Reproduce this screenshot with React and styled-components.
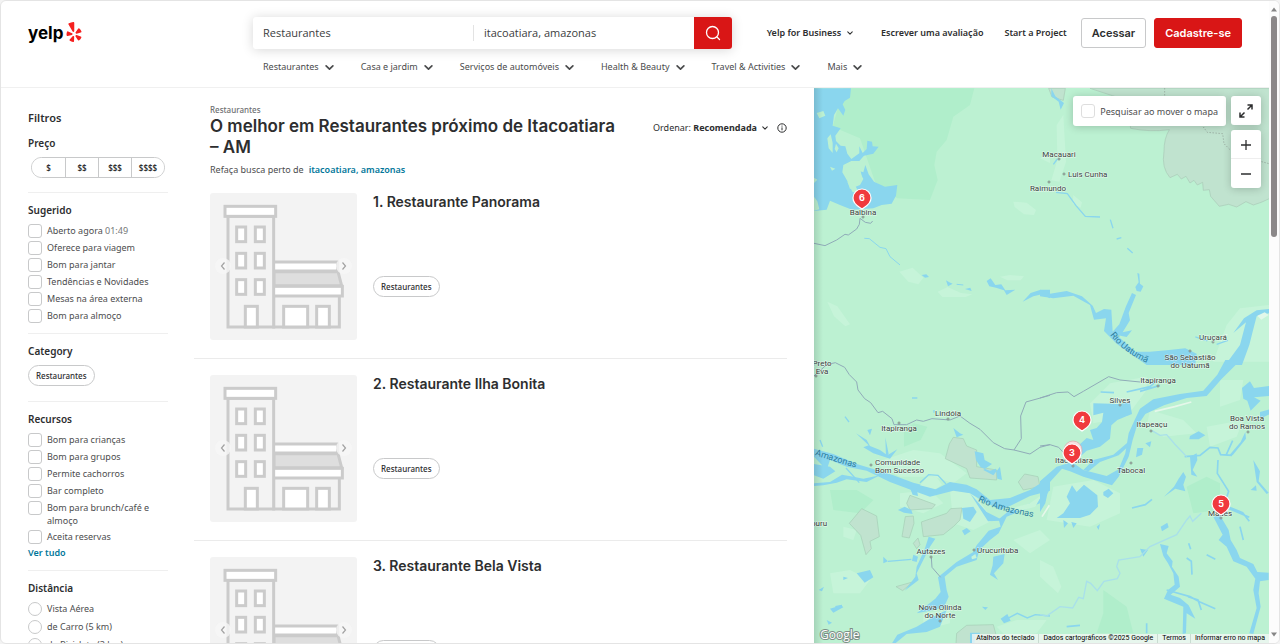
import React from "react";
import styled, { createGlobalStyle } from "styled-components";
import { FaYelp } from "react-icons/fa";

const ink = "#2d2e2f";
const red = "#d91616";
const teal = "#02779a";
const sans = '"Noto Sans", "Open Sans", sans-serif';
const display = 'Inter, "Liberation Sans", sans-serif';

const GlobalStyle = createGlobalStyle`
  * { box-sizing: border-box; }
  body { margin: 0; background: #f3f3f3; color: ${ink}; font: 9px/14px ${sans}; }
  button, input { font: inherit; color: inherit; margin: 0; }
  button { cursor: pointer; }
  h1, h2, h3, p, ul { margin: 0; padding: 0; }
  a { color: inherit; text-decoration: none; }
`;

const Frame = styled.div`
  display: grid;
  grid-template-columns: minmax(0, 1fr) 10px;
  height: 100vh;
  border: 1px solid #e4e4e4;
  border-radius: 6px;
  background: #fff;
  overflow: hidden;
`;

const Page = styled.div`
  display: flex;
  flex-direction: column;
  min-height: 0;
`;

const ScrollTrack = styled.div`
  display: flex;
  flex-direction: column;
  align-items: center;
  padding: 6px 0;
  background: #fcfcfc;
  gap: 4px;
`;

const ScrollThumb = styled.div`
  width: 6px;
  height: 35%;
  border-radius: 3px;
  background: #8b8889;
  margin-bottom: auto;
`;

/* ---------- header ---------- */

const Header = styled.header`
  padding: 16px 27px 13px;
  border-bottom: 1px solid #f0f0f0;
`;

const TopRow = styled.div`
  display: grid;
  grid-template-columns: 225px minmax(0, 479px) 1fr;
  align-items: center;
`;

const Logo = styled.a`
  display: flex;
  align-items: center;
  gap: 1px;
  color: #000;
  font: 700 17px/24px ${display};
  svg { color: #f5201f; margin-bottom: 3px; }
`;

const SearchForm = styled.form`
  display: grid;
  grid-template-columns: 1fr 1px 1fr 38px;
  align-items: center;
  height: 32px;
  border-radius: 3px;
  background: #fff;
  box-shadow: 0 1px 12px rgba(0, 0, 0, 0.16);
`;

const SearchInput = styled.input`
  width: 100%;
  border: 0;
  padding: 0 10px;
  background: transparent;
  font: 11px/16px "Open Sans", sans-serif;
  color: #3c3d3e;
  outline: none;
`;

const SearchDivider = styled.span`
  height: 16px;
  background: #e3e3e3;
`;

const SearchButton = styled.button`
  display: grid;
  place-items: center;
  height: 32px;
  border: 0;
  padding: 0;
  border-radius: 0 3px 3px 0;
  background: ${red};
  color: #fff;
`;

const UserNav = styled.nav`
  display: flex;
  justify-content: flex-end;
  align-items: center;
  gap: 21px;
  font-weight: 600;
  white-space: nowrap;
`;

const NavButton = styled.button`
  display: flex;
  align-items: center;
  gap: ${(p) => p.$gap || 6}px;
  border: 0;
  padding: 0;
  background: none;
  white-space: nowrap;
  margin-right: ${(p) => p.$after || 0}px;
`;

const AccountButtons = styled.div`
  display: flex;
  gap: 8px;
  margin-left: -7px;
`;

const AccountButton = styled.button`
  height: 30px;
  padding: 0 10px;
  border-radius: 3px;
  border: 1px solid ${(p) => (p.$primary ? red : "#c8c9ca")};
  background: ${(p) => (p.$primary ? red : "#fff")};
  color: ${(p) => (p.$primary ? "#fff" : ink)};
  font: 600 11px/16px ${display};
`;

const CategoryNav = styled.nav`
  display: flex;
  gap: 27px;
  margin: 11px 0 0 235px;
  color: #4a4b4c;
`;

/* ---------- body columns ---------- */

const Main = styled.main`
  flex: 1;
  min-height: 0;
  display: grid;
  grid-template-columns: 193px minmax(0, 620fr) minmax(0, 455fr);
  overflow: hidden;
`;

const Sidebar = styled.aside`
  padding: 23px 26px 0 27px;
  min-height: 0;
  overflow: hidden;
`;

const SidebarTitle = styled.h2`
  font-size: 11px;
  line-height: 14px;
  font-weight: 600;
  margin-bottom: 1px;
`;

const Section = styled.section`
  padding: 10px 0;
  border-bottom: 1px solid #efefef;
`;

const SectionTitle = styled.h3`
  font-size: 10px;
  line-height: 14px;
  font-weight: 600;
  margin-bottom: 7px;
`;

const PriceGroup = styled.div`
  display: grid;
  grid-template-columns: repeat(4, 1fr);
  height: 21px;
  margin: 0 3px 4px;
  border: 1px solid #c8c9ca;
  border-radius: 11px;
  overflow: hidden;
`;

const PriceButton = styled.button`
  border: 0;
  padding: 0;
  background: #fff;
  font-size: 8px;
  line-height: 12px;
  font-weight: 600;
  & + & { border-left: 1px solid #c8c9ca; }
`;

const Options = styled.div`
  display: flex;
  flex-direction: column;
  gap: ${(p) => p.$gap || 3}px;
`;

const Option = styled.label`
  display: flex;
  align-items: flex-start;
  gap: 5px;
  line-height: 13px;
  color: #4c4d4e;
  span { color: #757677; }
`;

const Tick = styled.input`
  appearance: none;
  flex: none;
  width: 14px;
  height: 14px;
  border: 1px solid #c8c9ca;
  border-radius: ${(p) => (p.type === "radio" ? "50%" : "3px")};
  background: #fff;
`;

const Chip = styled.button`
  display: inline-flex;
  align-items: center;
  height: 21px;
  padding: 0 7px;
  border: 1px solid #c8c9ca;
  border-radius: 11px;
  background: #fff;
  font-size: 8px;
  line-height: 12px;
  font-weight: 500;
`;

const ChipRow = styled.div`
  display: flex;
  margin-bottom: 5px;
`;

const TealLink = styled.a`
  color: ${teal};
  font-weight: 600;
`;

const ShowAll = styled(TealLink)`
  display: block;
  margin-top: 2px;
`;

const Results = styled.section`
  min-width: 0;
  padding: 16px 27px 0 0;
  overflow: hidden;
`;

const ResultsHead = styled.div`
  display: grid;
  grid-template-columns: minmax(0, 1fr) auto;
  column-gap: 24px;
  padding-left: 16px;
`;

const Breadcrumb = styled.a`
  grid-column: 1 / -1;
  font-size: 8px;
  line-height: 12px;
  font-weight: 500;
  color: #6e7072;
`;

const Title = styled.h1`
  font: 600 17px/21px ${display};
  span { white-space: nowrap; }
`;

const Sort = styled.div`
  display: flex;
  align-items: center;
  gap: 9px;
  height: 24px;
`;

const InfoButton = styled.button`
  display: flex;
  border: 0;
  padding: 0;
  background: none;
`;

const Redo = styled.p`
  grid-column: 1 / -1;
  margin-top: 5px;
  display: flex;
  gap: 5px;
  color: #4c4d4e;
`;

const Card = styled.article`
  display: flex;
  gap: 16px;
  padding: 16px 0 18px 16px;
  border-bottom: 1px solid #ebebeb;
`;

const Photo = styled.div`
  position: relative;
  flex: none;
  width: 147px;
  height: 147px;
  border-radius: 3px;
  overflow: hidden;
  > svg { display: block; }
`;

const PhotoArrow = styled.button`
  position: absolute;
  top: 65px;
  ${(p) => (p.$side === "left" ? "left: 5px" : "right: 5px")};
  display: grid;
  place-items: center;
  width: 16px;
  height: 16px;
  border: 0;
  padding: 0;
  border-radius: 50%;
  background: rgba(246, 246, 246, 0.8);
  color: #a2a2a2;
`;

const CardBody = styled.div`
  display: flex;
  flex-direction: column;
  align-items: flex-start;
  gap: 65px;
`;

const CardTitle = styled.h3`
  font: 600 14px/18px ${display};
`;

/* ---------- map ---------- */

const MapPane = styled.section`
  position: relative;
  min-width: 0;
  overflow: hidden;
  background: #bcf1d2;
  > svg { display: block; width: 100%; height: 100%; }
  &::before {
    content: "";
    position: absolute;
    inset: 0 auto 0 0;
    width: 9px;
    background: linear-gradient(90deg, rgba(0, 0, 0, 0.12), transparent);
  }
`;

const MapControls = styled.div`
  position: absolute;
  top: 8px;
  right: 8px;
  display: flex;
  align-items: flex-start;
  gap: 5px;
`;

const MapBox = styled.div`
  border-radius: 3px;
  background: #fff;
  box-shadow: 0 1px 8px rgba(0, 0, 0, 0.2);
`;

const MoveSearch = styled(MapBox)`
  display: flex;
  align-items: center;
  height: 30px;
  padding: 0 8px;
  label { align-items: center; }
  input { border-color: #dedede; }
`;

const MapButtons = styled.div`
  display: flex;
  flex-direction: column;
  gap: 5px;
`;

const IconButton = styled.button`
  display: grid;
  place-items: center;
  width: 30px;
  height: 29px;
  border: 0;
  padding: 0;
  background: none;
  & + & { box-shadow: 0 -1px 0 #eee; }
`;

const Attribution = styled.div`
  position: absolute;
  right: 0;
  bottom: 0;
  display: flex;
  background: rgba(245, 247, 246, 0.75);
  font: 400 7px/9px Roboto, sans-serif;
  color: #000;
  white-space: nowrap;
  > * { padding: 0 4px; border: 0; border-left: 1px solid #c9dcd1; }
  > :first-child { border-left: 0; background: none; }
`;

const Chevron = ({ size = 8, weight = 1 }) => (
  <svg width={size} height={size} viewBox="0 0 8 8" fill="none" stroke="currentColor" strokeWidth={weight} strokeLinecap="round" strokeLinejoin="round" aria-hidden="true">
    <path d="M1 2.5 4 5.5 7 2.5" />
  </svg>
);

const towerWindows = [102, 181, 260].flatMap((y) => [80, 136].map((x) => [x, y]));

const Building = () => (
  <svg width="147" height="147" viewBox="0 0 441 441" fill="none" stroke="#cbcbcb" strokeWidth="9" aria-hidden="true">
    <rect width="441" height="441" fill="#f3f3f3" stroke="none" />
    <path d="M191 312V402H388V312" />
    <path d="M192 236H384L395 278H192Z" fill="#dedede" />
    <rect x="190" y="207" width="193" height="27" fill="#fff" />
    <rect x="190" y="280" width="207" height="29" fill="#fff" />
    <rect x="221" y="340" width="72" height="62" fill="#fff" />
    <rect x="320" y="340" width="38" height="62" fill="#fff" />
    <rect x="54" y="70" width="137" height="332" fill="#f3f3f3" />
    <rect x="45" y="40" width="152" height="30" fill="#fff" />
    {towerWindows.map(([x, y]) => (
      <rect key={`${x}-${y}`} x={x} y={y} width="27" height="44" fill="#fff" />
    ))}
    <rect x="106" y="340" width="36" height="62" fill="#fff" />
  </svg>
);

/* Each sheet of the map is drawn at three times its size on screen. */
const Sheet = ({ x, y, children }) => (
  <g transform={`translate(${x} ${y}) scale(0.3333)`}>{children}</g>
);

const water = "#8ad6ee";
const land = "#bcf1d2";
const pale = "#c6f4d9";

const NorthWest = () => (
  <Sheet x={-4} y={-3}>
    <path fill="#b0eecb" d="M100 10H493L480 60 430 95 410 165 380 200 373 240 383 285 360 345 262 340 195 290 150 160 68 125Z" />
    <path fill={pale} d="M610 350l40 3 28 22-6 15-30-2-28-22zM268 560l40-12 32 30-15 20-30-8zM383 620l30-14 40 18 34 4-20 8-70 0zM52 650l30 14 38 54-14 6-34-30zM570 575l30-5 42 4-10 12-40 0zM690 220l30-16v30z" />
    <path fill={water} d="M12 10H123L120 38 104 48 98 58 106 75 100 92 84 70 72 90 68 122 92 130 76 152 78 168 92 182 106 184 112 206 124 222 148 205 148 184 158 204 170 192 172 167 186 170 188 184 206 185 190 206 162 212 148 228 124 228 100 240 97 262 112 288 120 312 150 300 160 282 148 258 160 262 166 240 176 268 192 290 225 305 262 300 258 332 245 356 215 360 190 370 126 374 90 360 60 347 50 374 12 378Z" />
    <path fill={land} d="M20 84l20-6 6 14-18 8zM52 160l10-12 6 26 0 30-12-14zM78 176l8 14-6 12-6-10zM12 278l10 6 -10 10zM60 245l16 6-10 6zM12 335l10 14 6 24-16 4zM105 245l46 8 6 30-26 10-20-26zM112 290l24 12 10 20-18 0z" />
    <path stroke="#90abb8" d="M12 475 45 482 80 465 105 448 115 450 140 432 148 418 150 400 166 412 182 415 188 408" fill="none" strokeWidth="3" />
    <path stroke={water} fill="none" strokeWidth="3" d="M163 460 178 461 210 487 228 491 240 515 270 540M440 598l20 2" />
    <path fill={water} d="M335 570l14-2 8 8-12 2zM408 586l10 6 10 4-14 8zM465 612l16-4 4 10zM530 588l12-8 14 20 18-2 12 18 30-2-26 16-8-14-24-8-20-4zM638 650l24-26 30-10 28 0v26l-24-12-26 6z" />
  </Sheet>
);

const NorthEast = () => (
  <Sheet x={226} y={-3}>
    <path fill={pale} d="M50 120l20-30 8 140-20 60-24-4 18-60zM100 330l26 22-4 16-24-12zM560 720l40-50 90-10v170h-110l-60 0z" />
    <path fill="#c0e3cf" stroke="#a9c9b6" strokeWidth="2" d="M150 10 260 46 272 130Q330 142 388 134 372 160 372 200 364 248 390 278L412 268 424 282 438 274 450 294 462 286 472 300 488 292 490 316 508 314 512 334 538 364 566 358 590 366 618 350 640 360 664 352 690 340V10ZM26 10 36 36 70 46 76 10Z" />
    <path stroke="#909f96" strokeWidth="3" strokeDasharray="3 6" fill="none" d="M374 10v22M490 126l12 16 46 4 4 30 20 20M665 230l22 6" />
    <path fill={water} d="M34 10 46 34 72 54 62 74 56 50 34 34ZM292 564l6 2 2 30 10 8-8 16-12-2-4-12 10-14zM0 614 30 626 80 618 126 634 158 662 168 684 192 672 214 674 218 740 238 718 258 664 276 624 288 630 266 684 270 706 248 742 276 736 260 756 230 750 286 800 330 800 380 796 436 790 470 806 466 840H320L230 776 192 738 198 700 162 704 150 660 100 632 40 640 0 634Z" />
    <path fill={water} d="M556 840 600 780 618 712 580 744 612 700 650 676 690 672V684L650 694 638 740 628 780 606 840Z" />
    <path stroke={water} strokeWidth="4" fill="none" d="M48 322l34 4 26 36 28 32 44 2M211 404l8 26M40 238l12-16M230 462l14-4M262 490l16 14M466 756l36 12M530 778l34-12" />
    <path fill="#e2f8ea" d="M652 692l22-10 12 8-22 14z" />
  </Sheet>
);

const SouthWest = () => (
  <Sheet x={-4} y={272}>
    <path fill="#b0eecb" d="M282 210l30-20 40 10-20 40-50 20zM60 390l80 0 50 30-40 40-80-10z" />
    <path fill={pale} d="M190 310l120-40 80 10 80 60-40 30-60-20-100 0zM420 390l70 10 60 80-60 30-60-20zM100 500l40 10-10 30-30-10zM340 760l80-10 0 40-80 20zM560 800l60-20 90 0-30 40-90 10zM270 400l90-10 40 40-60 30-70-20zM60 640l60-10 60 30-30 40-80 0zM610 540l80-30 30 30-60 40z" />
    <path fill="#c0e3cf" stroke="#a5cdb5" strokeWidth="2" d="M430 232 460 236 470 258 500 270 500 320 560 330 560 360 480 354 470 326 406 296 418 252ZM625 366 644 342 684 350 690 380 640 390ZM300 406 376 434 366 446 300 450 290 430ZM155 446 200 468 208 530 180 544 184 566 168 584 152 526 118 490ZM286 470 310 468 312 490 298 534 276 530ZM334 486 410 460 422 446 456 444 450 480 430 500 400 524 340 530ZM310 550l14-16 6 20-10 12zM258 680l50-14-30 26zM440 820l30-24 80-2 8 30-30 28h-90z" />
    <path fill={water} d="M12 266 70 282 140 312 200 330 250 346 310 368 380 386 420 366 470 374 500 388 540 420 600 414 660 390 720 352V392L660 408 600 438 570 450 520 424 480 400 430 392 360 410 310 392 240 366 170 332 110 320 60 300 50 330 12 290ZM12 312 60 320 76 334 40 356 12 346ZM12 370 60 366 96 344 130 350 160 356 210 346 170 366 110 358 80 368 40 376 12 378Z" />
    <path fill={water} d="M138 220 170 240 180 258 210 270 232 286 262 268 240 296 190 280 160 262 176 256ZM226 232l10 50-8 8zM172 210l14-4-6 20zM430 204l20 16 10 4-20 8zM494 274 520 280 524 300 546 312 520 330 550 346 570 320 576 360 562 356 558 326 540 332 512 322 498 300ZM456 444 490 440 500 456 480 486 460 476ZM264 450l20-10 20 10 4 12-26-4zM456 512l14-8 12 10-18 12zM300 384h20l4 24-16-4zM480 400l50 56 40 20 0 6-36 2zM550 590 584 582 580 610 552 640 564 660 540 644 548 616Z" />
    <path fill={water} d="M720 390 690 430 590 470 566 520 540 540 508 570 500 600 440 620 404 650 410 690 416 710 402 742 360 752 320 760 376 716 392 696 384 652 440 606 490 576 500 556 536 512 572 500 566 478 600 450 680 424ZM410 750 390 800 350 816 290 822 256 850H246L262 824 320 800 370 770ZM356 530 376 536 360 560 340 600 320 640 326 660 284 692 316 650 320 620 344 568ZM140 640 180 630 190 652 164 668ZM310 584l14 6-4 16-14-4zM220 590l14 14-14 6zM26 690l16-10-6 14zM60 746l34-10 6 6-30 16zM50 780l16 8-10 6zM516 740l18 2-8 8zM572 776l20-14 10 20-20 8zM480 818h30v4h-16v30h-14zM100 650l14 4-14 6z" />
    <path fill={pale} d="M330 376 352 350 380 352 396 374 376 388ZM600 446l60-16 36-26-20 36-50 14zM484 590l12-8 4 12-14 4z" />
    <path stroke={water} strokeWidth="4" fill="none" d="M330 368 356 344 384 346 408 372M592 776l30-16 30 14 24-10 44 4M234 604l70-6M108 324l40 44M105 170l12 16M306 114h16M40 826l16-6M30 240l8 20M372 150v8M76 740l20-4" />
    <path stroke="#90abb8" strokeWidth="3" fill="none" d="M12 48 50 14 76 8 104 22 118 44 140 66 144 90 164 116 182 128 204 158 218 154 246 176 252 194 290 194 320 180 340 184 366 176 420 180 450 168 480 190 510 208 550 248 584 266 612 270 634 236 632 168 648 126 720 106M612 270 660 282 690 262 720 254M364 592 366 622 392 652" />
  </Sheet>
);

const SouthEast = () => (
  <Sheet x={226} y={272}>
    <path fill={pale} d="M150 130l60-60 110-20 0 40-60 80-100 20zM330 150l100 30 40 40-100 10-50-30zM40 380l120-20 80 40 0 60-90 40-130-20zM540 60l70 0-10 60-60 20zM500 200l110-20-20 50-80 30zM0 600l40 20 24 60-10 20-54-50z" />
    <path fill="#b0eecb" d="M440 380l60-30 40 20 0 80-80 10zM190 690l70 50 20 80-110 0 20-60z" />
    <path fill={water} d="M556 0H602L544 58 500 108 440 114 372 136 316 162 290 200 278 240 266 290 236 350 216 376 130 350 90 334 66 326 30 366 16 430 0 456V364L50 320 96 306 130 330 200 348 236 328 256 280 266 220 284 180 300 146 340 118 420 102 490 92 532 44Z" />
    <path fill={water} d="M160 130 240 132 270 126 276 162 232 180 214 196 210 236 180 260 140 272 120 290 110 262 140 234 160 240 150 210 170 204 186 186 190 158 160 166ZM96 376 110 396 132 374 172 406 174 440 150 464 120 474 50 474 70 460 90 430 80 410ZM130 330 160 300 220 284 262 248V262L236 286 180 306 146 334ZM190 396l16-10 14 14-16 14-14-8zM292 264l18 0-4 20-18 8zM316 250l18-6-4 18zM450 228l26-14 20 12-20 12-28 0zM606 84l24-20 12 20 48-6v30l-48 4 20 10-30 30-10-30-12-6zM660 156l30-8v14l-30 14zM616 216l-14 30-34 40 10 0 40-50z" />
    <path fill={water} d="M520 470 540 466 566 510 572 540 590 570 600 594 640 612 652 636 686 638V660L660 664 656 700 662 740 640 822 628 820 650 744 640 690 646 656 620 620 580 604 560 560 536 540 548 524ZM360 552 386 558 380 580 398 604 396 620 416 650 420 680 392 704 420 714 446 736 466 776 440 760 438 820 428 822 430 740 372 716 384 690 404 674 400 640 384 610 370 588ZM430 336l8 14-8 24 6 20-30-8-34 24 30-30 14-24zM450 290l20-10 2 20-14 30 14 20-18-6zM362 500l20-12 4 14-20 12zM632 390l16-14 2 16zM300 566l24 4-14 20zM640 300l20 34-4 30 30 34-6 4-30-36zM70 480l14 10-12 14zM94 486l16 4-10 14zM170 500l10-8-4 18z" />
    <path stroke={water} strokeWidth="5" fill="none" d="M434 290 480 286 510 262 534 264 542 284 576 286M558 286l20-44M534 300l-2 40 34 54-6 18M564 440l44 18 20 26M568 446l60 26M276 444l40-10 20-16M446 550l6 18M500 584l26 14M440 594l14 10 2 40M260 96 330 80 350 62M300 94l60-18M182 96l40 2M600 500l10 40M380 690l70 20 30 16 46 20M80 800l40-4M320 790v30M444 710l30 10 10 30" />
    <path stroke="#a9e0ea" strokeWidth="4" fill="none" d="M336 212 360 226 380 224 404 252 440 290M0 764 20 768 60 740 98 744 116 712 130 716 140 664 152 670 172 692 192 664 232 656 240 640 230 620 236 600 300 590 330 560 410 524 440 480 450 468 458 484 484 460" />
    <path stroke="#e6f7ea" strokeWidth="5" fill="none" d="M344 154l60-14 50-14M6 470l22-34" />
    <path stroke="#90abb8" strokeWidth="3" fill="none" d="M0 114 50 98 84 96 102 110 130 94 206 50 240 60 300 66M0 258 30 254 56 262 90 300" />
  </Sheet>
);

const places = [
  { lines: ["Macauari"], x: 245, y: 69, dot: [245, 71] },
  { lines: ["Luis Cunha"], x: 254, y: 89, anchor: "start", dot: [250, 86] },
  { lines: ["Raimundo"], x: 234, y: 103, dot: [235, 94] },
  { lines: ["Balbina"], x: 49, y: 127, dot: [49, 129] },
  { lines: ["Preto", "Eva"], x: 8, y: 278, dot: [2, 288] },
  { lines: ["Itapiranga"], x: 85, y: 343, dot: [85, 335] },
  { lines: ["Lindóia"], x: 134, y: 328, dot: [134, 331] },
  { lines: ["Comunidade", "Bom Sucesso"], x: 61, y: 377, anchor: "start", dot: [57, 377] },
  { lines: ["ouru"], x: 5, y: 438 },
  { lines: ["Autazes"], x: 117, y: 466, dot: [117, 469] },
  { lines: ["Urucurituba"], x: 163, y: 465, anchor: "start", dot: [160, 462] },
  { lines: ["Nova Olinda", "do Norte"], x: 126, y: 522, dot: [126, 533] },
  { lines: ["Uruçará"], x: 399, y: 252, dot: [399, 254] },
  { lines: ["São Sebastião", "do Uatumã"], x: 376, y: 272, dot: [376, 263] },
  { lines: ["Itapiranga"], x: 344, y: 295, dot: [344, 298] },
  { lines: ["Silves"], x: 306, y: 315, dot: [306, 317] },
  { lines: ["Itapeaçu"], x: 338, y: 339, dot: [337, 343] },
  { lines: ["Tabocal"], x: 317, y: 385, dot: [317, 375] },
  { lines: ["Itacoatiara"], x: 260, y: 375, dot: [259, 378] },
  { lines: ["Boa Vista", "do Ramos"], x: 433, y: 333, dot: [434, 344] },
  { lines: ["Maués"], x: 406, y: 428, dot: [407, 430] },
];

const pins = [
  { n: 6, x: 48, y: 110 },
  { n: 4, x: 268, y: 332 },
  { n: 3, x: 258, y: 365 },
  { n: 5, x: 407, y: 416 },
];

const PlaceText = styled.text`
  font: 400 8px Roboto, sans-serif;
  fill: #35423b;
  stroke: rgba(255, 255, 255, 0.7);
  stroke-width: 1px;
  paint-order: stroke;
`;

const RiverText = styled.text`
  font: 400 9px Roboto, sans-serif;
  fill: #2f7f9f;
`;

const PinText = styled.text`
  font: 700 9px ${display};
  fill: #fff;
`;

const GoogleMark = styled.text`
  font: 500 12px "Open Sans", sans-serif;
  fill: #fff;
  stroke: #7d8f86;
  stroke-width: 2px;
  paint-order: stroke;
`;

const pinShape = "M0 11 C-2 9-9 7-9 0A9 9 0 0 1 9 0C9 7 2 9 0 11Z";

const MapDrawing = () => (
  <svg viewBox="0 0 455 555" preserveAspectRatio="xMidYMid slice" role="img" aria-label="Mapa">
    <defs>
      <path id="uatuma" d="M296 247Q310 266 342 279" />
      <path id="amazonas-west" d="M1 367Q18 373 50 382" />
      <path id="amazonas-east" d="M164 413Q184 424 232 431" />
    </defs>
    <rect width="455" height="555" fill={land} />
    <NorthWest />
    <NorthEast />
    <SouthWest />
    <SouthEast />
    <RiverText><textPath href="#uatuma">Rio Uatumã</textPath></RiverText>
    <RiverText><textPath href="#amazonas-west">Amazonas</textPath></RiverText>
    <RiverText><textPath href="#amazonas-east">Rio Amazonas</textPath></RiverText>
    {places.map((p) => (
      <g key={`${p.lines[0]}-${p.x}`}>
        {p.dot && <circle cx={p.dot[0]} cy={p.dot[1]} r="1" fill="#fff" stroke="#52645a" strokeWidth="0.7" />}
        {p.lines.map((line, i) => (
          <PlaceText key={line} x={p.x} y={p.y + i * 8} textAnchor={p.anchor || "middle"}>{line}</PlaceText>
        ))}
      </g>
    ))}
    <path d={pinShape} transform="translate(259 362)" fill="#f6dfe0" stroke="#dba9ac" strokeWidth="0.7" />
    {pins.map((p) => (
      <a key={p.n} href={`#resultado-${p.n}`} aria-label={`Resultado ${p.n}`}>
        <g transform={`translate(${p.x} ${p.y})`}>
          <path d={pinShape} fill="#f03a3e" stroke="#fff" strokeWidth="1.2" />
          <PinText y="3" textAnchor="middle">{p.n}</PinText>
        </g>
      </a>
    ))}
    <GoogleMark x="6" y="551">Google</GoogleMark>
  </svg>
);

/* ---------- data ---------- */

const categories = ["Restaurantes", "Casa e jardim", "Serviços de automóveis", "Health & Beauty", "Travel & Activities", "Mais"];
const suggested = [
  <>Aberto agora <span>01:49</span></>,
  "Oferece para viagem",
  "Bom para jantar",
  "Tendências e Novidades",
  "Mesas na área externa",
  "Bom para almoço",
];
const features = ["Bom para crianças", "Bom para grupos", "Permite cachorros", "Bar completo", "Bom para brunch/café e almoço", "Aceita reservas"];
const distances = ["Vista Aérea", "de Carro (5 km)", "de Bicicleta (3 km)"];
const restaurants = ["Restaurante Panorama", "Restaurante Ilha Bonita", "Restaurante Bela Vista"];

const OptionList = ({ items, type = "checkbox", gap, name }) => (
  <Options $gap={gap}>
    {items.map((item, i) => (
      <Option key={i}>
        <Tick type={type} name={name} />
        <div>{item}</div>
      </Option>
    ))}
  </Options>
);

const SiteHeader = () => (
  <Header>
    <TopRow>
      <Logo href="#inicio">yelp<FaYelp size={20} /></Logo>
      <SearchForm onSubmit={(e) => e.preventDefault()}>
        <SearchInput aria-label="O que procura" defaultValue="Restaurantes" />
        <SearchDivider />
        <SearchInput aria-label="Onde" defaultValue="itacoatiara, amazonas" />
        <SearchButton aria-label="Pesquisar">
          <svg width="16" height="16" viewBox="0 0 16 16" fill="none" stroke="currentColor" strokeWidth="1.3" strokeLinecap="round">
            <circle cx="7.5" cy="7.5" r="6" />
            <path d="m12 12 2.5 2.5" />
          </svg>
        </SearchButton>
      </SearchForm>
      <UserNav>
        <NavButton $after={7}>Yelp for Business <Chevron size={6} weight={1.4} /></NavButton>
        <a href="#avaliar">Escrever uma avaliação</a>
        <a href="#projeto">Start a Project</a>
        <AccountButtons>
          <AccountButton>Acessar</AccountButton>
          <AccountButton $primary>Cadastre-se</AccountButton>
        </AccountButtons>
      </UserNav>
    </TopRow>
    <CategoryNav>
      {categories.map((c) => (
        <NavButton key={c}>{c} <Chevron size={9} weight={1.5} /></NavButton>
      ))}
    </CategoryNav>
  </Header>
);

const Filters = () => (
  <Sidebar>
    <SidebarTitle>Filtros</SidebarTitle>
    <Section>
      <SectionTitle>Preço</SectionTitle>
      <PriceGroup>
        {["$", "$$", "$$$", "$$$$"].map((p) => <PriceButton key={p}>{p}</PriceButton>)}
      </PriceGroup>
    </Section>
    <Section>
      <SectionTitle>Sugerido</SectionTitle>
      <OptionList items={suggested} />
    </Section>
    <Section>
      <SectionTitle>Category</SectionTitle>
      <ChipRow><Chip>Restaurantes</Chip></ChipRow>
    </Section>
    <Section>
      <SectionTitle>Recursos</SectionTitle>
      <OptionList items={features} />
      <ShowAll href="#recursos">Ver tudo</ShowAll>
    </Section>
    <Section>
      <SectionTitle>Distância</SectionTitle>
      <OptionList items={distances} type="radio" name="distancia" gap={4} />
    </Section>
  </Sidebar>
);

const ResultCard = ({ index, name }) => (
  <Card id={`resultado-${index}`}>
    <Photo>
      <Building />
      <PhotoArrow $side="left" aria-label="Anterior">
        <svg width="8" height="10" viewBox="0 0 8 10" fill="none" stroke="currentColor" strokeWidth="1.2"><path d="M5.5 1.5 2.5 5l3 3.5" /></svg>
      </PhotoArrow>
      <PhotoArrow $side="right" aria-label="Próxima">
        <svg width="8" height="10" viewBox="0 0 8 10" fill="none" stroke="currentColor" strokeWidth="1.2"><path d="M2.5 1.5l3 3.5-3 3.5" /></svg>
      </PhotoArrow>
    </Photo>
    <CardBody>
      <CardTitle>{index}. <a href={`#${index}`}>{name}</a></CardTitle>
      <Chip>Restaurantes</Chip>
    </CardBody>
  </Card>
);

const ResultList = () => (
  <Results>
    <ResultsHead>
      <Breadcrumb href="#restaurantes">Restaurantes</Breadcrumb>
      <Title>O melhor em Restaurantes próximo de Itacoatiara <span>– AM</span></Title>
      <Sort>
        <NavButton $gap={5}><span>Ordenar: <b>Recomendada</b></span> <Chevron size={6} weight={1.4} /></NavButton>
        <InfoButton aria-label="Informações">
          <svg width="10" height="10" viewBox="0 0 10 10" fill="none" stroke="currentColor" strokeWidth="1">
            <circle cx="5" cy="5" r="4.2" />
            <path d="M5 4.4V7.3M5 2.6v1" />
          </svg>
        </InfoButton>
      </Sort>
      <Redo>Refaça busca perto de <TealLink href="#perto">itacoatiara, amazonas</TealLink></Redo>
    </ResultsHead>
    {restaurants.map((name, i) => <ResultCard key={name} index={i + 1} name={name} />)}
  </Results>
);

const MapPanel = () => (
  <MapPane>
    <MapDrawing />
    <MapControls>
      <MoveSearch>
        <Option>
          <Tick type="checkbox" />
          <div>Pesquisar ao mover o mapa</div>
        </Option>
      </MoveSearch>
      <MapButtons>
        <MapBox>
          <IconButton aria-label="Expandir mapa">
            <svg width="16" height="16" viewBox="0 0 16 16" fill="none" stroke="currentColor" strokeWidth="1.5">
              <path d="M9.500 2H14v4.500M14 2 9.500 6.500M6.500 14H2V9.500M2 14l4.500-4.500" />
            </svg>
          </IconButton>
        </MapBox>
        <MapBox>
          <IconButton aria-label="Aumentar zoom">
            <svg width="12" height="12" viewBox="0 0 12 12" stroke="currentColor" strokeWidth="1.3"><path d="M6 1v10M1 6h10" /></svg>
          </IconButton>
          <IconButton aria-label="Diminuir zoom">
            <svg width="12" height="12" viewBox="0 0 12 12" stroke="currentColor" strokeWidth="1.3"><path d="M1 6h10" /></svg>
          </IconButton>
        </MapBox>
      </MapButtons>
    </MapControls>
    <Attribution>
      <button>Atalhos do teclado</button>
      <span>Dados cartográficos ©2025 Google</span>
      <a href="#termos">Termos</a>
      <a href="#erro">Informar erro no mapa</a>
    </Attribution>
  </MapPane>
);

const ScrollArrow = ({ down }) => (
  <svg width="6" height="5" viewBox="0 0 6 5" fill="#858585" aria-hidden="true">
    <path d={down ? "M0 0.5H6L3 4.5Z" : "M0 4.5H6L3 0.5Z"} />
  </svg>
);

export default function App() {
  return (
    <>
      <GlobalStyle />
      <Frame>
        <Page>
          <SiteHeader />
          <Main>
            <Filters />
            <ResultList />
            <MapPanel />
          </Main>
        </Page>
        <ScrollTrack>
          <ScrollArrow />
          <ScrollThumb />
          <ScrollArrow down />
        </ScrollTrack>
      </Frame>
    </>
  );
}
